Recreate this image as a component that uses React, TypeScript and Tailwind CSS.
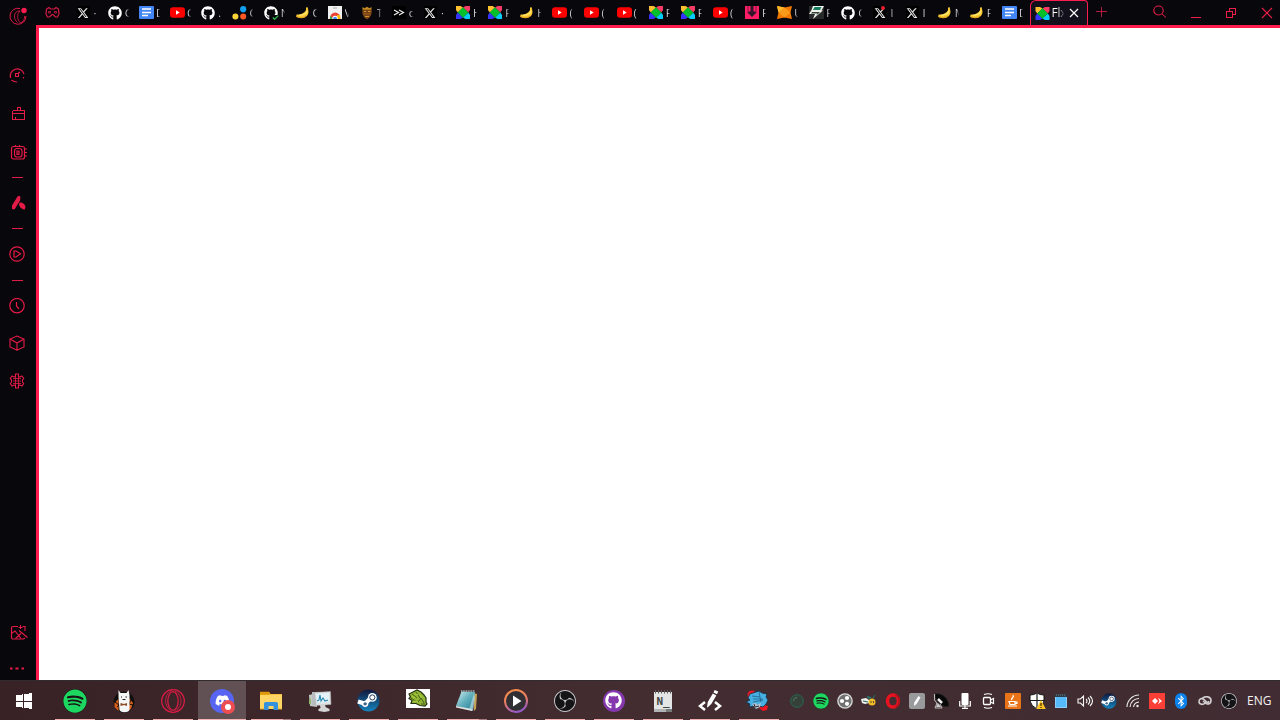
import type { ReactNode } from "react";
import { FaGithub, FaSpotify, FaDiscord, FaXTwitter, FaBluetoothB } from "react-icons/fa6";
import { SiObsstudio } from "react-icons/si";

type DrawProps = { w?: number; h?: number; box?: string; children: ReactNode; crisp?: boolean; className?: string };

function Draw({ w = 16, h, box, children, crisp, className = "" }: DrawProps) {
  const height = h ?? w;
  return (
    <svg
      width={w}
      height={height}
      viewBox={box ?? `0 0 ${w} ${height}`}
      fill="none"
      shapeRendering={crisp ? "crispEdges" : "auto"}
      className={`block shrink-0 ${className}`}
    >
      {children}
    </svg>
  );
}

/* ---------- tab favicons ---------- */

const XIcon = ({ dot }: { dot?: boolean }) => (
  <span className="relative flex h-[13px] w-[13px] items-center justify-center bg-black text-[#e6e6e6]">
    <FaXTwitter size={12} />
    {dot && <span className="absolute right-[1px] top-0 size-[4px] rounded-full bg-[#f01c30]" />}
  </span>
);
const GitIcon = () => <FaGithub size={14} className="shrink-0 text-white" />;
const GitCheck = () => (
  <span className="relative flex shrink-0 text-white">
    <FaGithub size={14} />
    <span className="absolute -right-[1px] bottom-0 bg-[#08070c]">
      <Draw w={7} h={5}><path d="M.8 2.500 2.600 4.300 6.300.600" stroke="#2fb54c" strokeWidth="1.300" /></Draw>
    </span>
  </span>
);
const Docs = () => (
  <Draw w={15} h={13}>
    <rect width="15" height="13" rx="1" fill="#4285f4" />
    <path d="M3 3h9M3 6.500h9M3 9.500h6" stroke="#fff" strokeWidth="1.600" />
  </Draw>
);
const YouTube = () => (
  <Draw w={15} h={11}>
    <rect width="15" height="10.500" y=".2" rx="3" fill="#f00" />
    <path d="M6 3.200v4.600l3.700-2.300z" fill="#fff" />
  </Draw>
);
const Dots = () => (
  <Draw w={15} h={14}>
    <circle cx="11.200" cy="3.200" r="3.100" fill="#129ff0" />
    <circle cx="3.400" cy="10.500" r="3" fill="#fbd438" />
    <circle cx="11.200" cy="10.500" r="3" fill="#ff5722" />
  </Draw>
);
const Banana = () => (
  <Draw w={14} h={13}>
    <path d="M10 1.500 11.700 1.200l.5 2.800c.8 3-.2 6-3.400 7.500-3 1.300-6.800.8-8.800-1l.7-2c3 .5 7.300-.8 9.300-4.300z" fill="#fac831" />
    <path d="M11 4.500c0 2.800-2.700 4.300-8 5" stroke="#ffe872" strokeWidth="1.300" />
    <path d="M.6 10.500c3 1.600 7.400 1.500 9.700-.6" stroke="#dc971b" strokeWidth=".8" />
  </Draw>
);
const ChromeStore = () => (
  <Draw w={14} h={13}>
    <path d="M0 0h14v13H0z" fill="#f1f1f1" />
    <path d="M5 2h4" stroke="#a8a8a8" />
    <path d="M2 12.500a5.200 6 0 0 1 10.400 0z" fill="#ea4335" />
    <path d="M2.500 9.500 5 13H1.800z" fill="#34a853" />
    <path d="M9 9h2.700l.8 4H8z" fill="#fbbc05" />
    <path d="M4.300 13a2.800 3.200 0 0 1 5.600 0z" fill="#fff" />
    <path d="M5.200 13a1.900 2.300 0 0 1 3.800 0z" fill="#4285f4" />
  </Draw>
);
const Honey = () => (
  <Draw w={14} h={14}>
    <path d="M2.500 3.500h9c.8 3-.3 6-2 8.300L7 13.500l-2.700-2C2.800 9.500 1.800 6.500 2.500 3.500z" fill="#754316" />
    <path d="m2.500 1 2 1.300L7 .8l2.500 1.500 2-1.300v2.700h-9z" fill="#c78b22" />
    <path d="M4 5.500h2M8 5.500h2.500M5 10.500h4" stroke="#d4932a" strokeWidth="1" />
    <path d="M3 8h7.500" stroke="#9b5f1c" />
  </Draw>
);
const Chevrons = () => (
  <Draw w={14} h={13}>
    <path d="M0 0h14v13H0z" fill="#000" />
    <path d="m2 4 4.500 2.500L2 9M7 4l4.500 2.500L7 9" stroke="#eee" strokeWidth="1.200" />
  </Draw>
);
const Flixel = () => (
  <Draw w={14} h={13}>
    <path d="M0 0h4.500L7 1.500 1.700 6.500 0 4z" fill="#ffc132" />
    <path d="M14 0H9.500L7 1.500l5.300 5L14 4z" fill="#f83b64" />
    <path d="M0 13h4.500L7 11.500 1.700 6.500 0 9z" fill="#3433ff" />
    <path d="M14 13H9.500L7 11.500l5.300-5L14 9z" fill="#04cdfb" />
    <path d="m7 1.200 5.300 5.300L7 11.800 1.700 6.500z" fill="#00c02c" />
  </Draw>
);
const PinkDown = () => (
  <Draw w={14} h={13}>
    <path d="M0 0h14v13H0z" fill="#ff1d65" />
    <path d="M5.500 0h3v5.500h3v1L7 11 2.500 6.500v-1h3z" fill="#31132a" />
    <path d="M2.500 0h1v5h-1zM10.500 0h1v5h-1z" fill="#7c1742" />
  </Draw>
);
const Haxe = () => (
  <Draw w={15} h={13}>
    <path d="m0 0 7.500 1.500L15 0l-1.500 6.500L15 13l-7.500-1.500L0 13l1.500-6.500z" fill="#f17900" />
    <path d="m7.500 1.500 6 5-6 5-6-5z" fill="#f99b1a" />
    <path d="m0 0 7.500 1.500-6 5z" fill="#fcb92f" />
  </Draw>
);
const Bolt = () => (
  <Draw w={15} h={13}>
    <path d="M0 0h15v13H0z" fill="#28292a" />
    <path d="M4 0h11l-2.500 4.500h1.500L4 13l2-5H0l2.500-4z" fill="#edf3e9" />
    <path d="M5.500 1h7l-1.500 3h-7z" fill="#167b61" />
    <path d="M8 6h3L7 10l1.500-2.500H2L3 6z" fill="#36433d" />
  </Draw>
);

type Tab = { icon: ReactNode; text: string };
const narrowTabs: Tab[] = [
  { icon: <XIcon />, text: "·" },
  { icon: <GitIcon />, text: "G" },
  { icon: <Docs />, text: "D" },
  { icon: <YouTube />, text: "C" },
  { icon: <GitIcon />, text: "." },
  { icon: <Dots />, text: "C" },
  { icon: <GitCheck />, text: "N" },
];
const wideTabs: Tab[] = [
  { icon: <Banana />, text: "O" },
  { icon: <ChromeStore />, text: "V" },
  { icon: <Honey />, text: "T" },
  { icon: <Chevrons />, text: "c" },
  { icon: <XIcon />, text: "·" },
  { icon: <Flixel />, text: "H" },
  { icon: <Flixel />, text: "F" },
  { icon: <Banana />, text: "H" },
  { icon: <YouTube />, text: "(" },
  { icon: <YouTube />, text: "(" },
  { icon: <YouTube />, text: "(" },
  { icon: <Flixel />, text: "F" },
  { icon: <Flixel />, text: "F" },
  { icon: <YouTube />, text: "(" },
  { icon: <PinkDown />, text: "F" },
  { icon: <Haxe />, text: "U" },
  { icon: <Bolt />, text: "F" },
  { icon: <GitIcon />, text: "G" },
  { icon: <XIcon dot />, text: "I" },
  { icon: <XIcon />, text: "I" },
  { icon: <Banana />, text: "M" },
  { icon: <Banana />, text: "F" },
  { icon: <Docs />, text: "D" },
];

function TabContent({ tab }: { tab: Tab }) {
  return (
    <>
      <span className="flex w-[15px] shrink-0 justify-start">{tab.icon}</span>
      <span className="ml-[2px] w-[4px] overflow-hidden bg-gradient-to-r from-[#d8d8dc] from-40% to-[#d8d8dc]/10 bg-clip-text text-[11px] leading-[14px] text-transparent">
        {tab.text}
      </span>
    </>
  );
}

function TopBar() {
  return (
    <header className="flex h-[25px] min-w-0 flex-1 items-stretch pl-[9px]">
      <div className="flex w-[31.500px] shrink-0 items-center">
        <Draw w={15} h={13}>
          <path d="M4 1.500 1.500 3 1 8l1.500 3h2L7 8.500h1L10.500 11h2L14 8l-.5-5L11 1.500 9.500 3h-4z" stroke="#d61b43" strokeWidth="1.200" />
          <path d="M3.500 5.500h2v1.500h-2zM9.500 5.500h2v1.500h-2z" stroke="#d61b43" strokeWidth=".8" />
        </Draw>
      </div>
      {narrowTabs.map((t, i) => (
        <div key={i} className="flex w-[31.200px] shrink-0 items-center"><TabContent tab={t} /></div>
      ))}
      <div className="w-[0.700px] shrink-0" />
      {wideTabs.map((t, i) => (
        <div key={i} className="flex w-[32.120px] shrink-0 items-center"><TabContent tab={t} /></div>
      ))}
      <div className="-ml-[4.500px] flex w-[58px] shrink-0 items-center rounded-tl-[6px] rounded-tr-[4px] border-x border-t border-[#fa1e4e] bg-[#12101a] pl-[4px]">
        <Draw w={15} h={13} box="0 0 14 13">
          <path d="M0 0h4.500L7 1.500 1.700 6.500 0 4z" fill="#ffc132" />
          <path d="M14 0H9.500L7 1.500l5.300 5L14 4z" fill="#f83b64" />
          <path d="M0 13h4.500L7 11.500 1.700 6.500 0 9z" fill="#3433ff" />
          <path d="M14 13H9.500L7 11.500l5.300-5L14 9z" fill="#04cdfb" />
          <path d="m7 1.200 5.300 5.300L7 11.800 1.700 6.500z" fill="#00c02c" />
        </Draw>
        <span className="ml-[2px] w-[12px] overflow-hidden bg-gradient-to-r from-white from-50% to-white/10 bg-clip-text text-[12px] leading-[14px] tracking-[-0.3px] text-transparent">Flx</span>
        <Draw w={10} className="ml-[5px]"><path d="m1 1 8 8M9 1 1 9" stroke="#fff" strokeWidth="1.200" /></Draw>
      </div>
      <div className="ml-[7px] flex w-[12px] items-center">
        <Draw w={12} h={14} crisp><path d="M6.500 1v10M1 5.500h11" stroke="#b51b3f" /></Draw>
      </div>
      <div className="ml-auto flex items-center pr-[7px] text-[#eb1e49]">
        <Draw w={14} h={14} className="-mt-[2px]"><ellipse cx="5.500" cy="5.500" rx="4.700" ry="4.500" stroke="currentColor" strokeWidth="1.100" /><path d="m9 9 4 3.500" stroke="currentColor" /></Draw>
        <Draw w={12} h={12} className="ml-[23px]" crisp><path d="M1 10.500h10" stroke="currentColor" /></Draw>
        <Draw w={12} h={12} className="ml-[23px]" crisp><path d="M4.500 4V1.500h6v6H8M1.500 4.500h6v6h-6z" stroke="currentColor" /></Draw>
        <Draw w={12} h={12} className="ml-[24px]"><path d="m1 1 10 10M11 1 1 11" stroke="currentColor" strokeWidth="1.100" /></Draw>
      </div>
    </header>
  );
}

/* ---------- side bar ---------- */

const Cell = ({ className, children }: { className: string; children: ReactNode }) => (
  <div className={`flex w-[34px] shrink-0 items-center justify-center text-[#e51b47] ${className}`}>{children}</div>
);
const Rule = () => <Cell className="h-[11px] pl-px"><span className="h-px w-[11px] bg-[#e51b47]" /></Cell>;

function SideBar() {
  return (
    <nav className="flex w-[36px] shrink-0 flex-col">
      <div className="h-[31px] shrink-0" />
      <Cell className="h-[39px] pb-px">
        <Draw w={16}>
          <path d="M1.500 11A7 7 0 1 1 15 7" stroke="currentColor" strokeWidth="1.200" />
          <path d="M2.500 13q2.500 2 5.500 2M14.500 10v1.500" stroke="currentColor" strokeWidth="1.200" />
          <path d="M6.500 6.500h3v3h-3zM9 6.500 11 5" stroke="currentColor" strokeWidth="1.100" />
        </Draw>
      </Cell>
      <Cell className="h-[38px] pb-[2px] pl-[2px]">
        <Draw w={15} h={15} crisp>
          <path d="M6.500 4V1.500h3V4M2.500 4.500h11v3h-12v-2zM1.500 7.500v6M13.500 7.500v6M1 13.500h13M4.500 11v3" stroke="currentColor" />
        </Draw>
      </Cell>
      <Cell className="h-[39px] pb-px pl-[3px]">
        <Draw w={17} h={17}>
          <rect x="1.500" y="2.500" width="13" height="12.500" rx="2" stroke="currentColor" strokeWidth="1.200" />
          <rect x="4.500" y="4.500" width="7.500" height="8.500" rx="2.500" stroke="currentColor" strokeWidth="1.200" />
          <path d="M7 7h2v3.500H7zM5.500 1v2M9.500 1v2M15 5h2M15 8.500h2M15 12h2" stroke="currentColor" strokeWidth="1.200" />
        </Draw>
      </Cell>
      <Rule />
      <Cell className="h-[40px] pl-[2px]">
        <Draw w={15} h={16}>
          <path d="M1 14V10.500L6.500 1.500 8.200.700 9.500 2 9 5.500l-5.500 9z" fill="currentColor" />
          <path d="M8.500 7.500c3-.5 5.800 2 6 4.500l-.7 2.500c-3 0-5.300-2.500-5.800-5z" fill="currentColor" />
        </Draw>
      </Cell>
      <Rule />
      <Cell className="h-[40px]">
        <Draw w={16}><circle cx="8" cy="8" r="7.200" stroke="currentColor" strokeWidth="1.200" /><path d="M5 5h2l4.500 2.700L7 11H5z" stroke="currentColor" strokeWidth="1.200" /></Draw>
      </Cell>
      <div className="h-px shrink-0" />
      <Rule />
      <Cell className="h-[39px]">
        <Draw w={16}><circle cx="8" cy="7.700" r="7.200" stroke="currentColor" strokeWidth="1.200" /><path d="M7.500 4v4l2.500 3" stroke="currentColor" strokeWidth="1.200" /></Draw>
      </Cell>
      <Cell className="h-[37px] pb-px">
        <Draw w={16}><path d="m8 1 7 3v8l-7 3.200L1 12V4zM1 4l7 4 7-4M8 8v7" stroke="currentColor" strokeWidth="1.100" /></Draw>
      </Cell>
      <Cell className="h-[39px] pb-px">
        <Draw w={16}>
          <path d="M6.500 1h3v2.500l1.500.5 2-1 1.700 2.500L13.500 7v2l1.200 1.500-1.700 2.500-2-1-1.500.5V15h-3v-2.500L5 12l-2 1-1.700-2.500L2.500 9V7L1.300 5.500 3 3l2 1 1.500-.5z" stroke="currentColor" strokeWidth="1.100" />
          <path d="M6.500 4v8M9.500 4v8M4 5.500h8M4 8h8M4 10.500h8" stroke="currentColor" strokeWidth=".8" />
        </Draw>
      </Cell>
      <div className="flex-1" />
      <Cell className="h-[30px] pb-px pl-[3px]">
        <Draw w={18} h={15}>
          <path d="M8 1.500H3a1.500 1.500 0 0 0-1.500 1.500v9.500A1.500 1.500 0 0 0 3 14h10.500l1.500-1" stroke="currentColor" strokeWidth="1.200" />
          <path d="m2 8 3-2 6 7.500M5.500 13.500 11 8.500M12.500 1.500h2.500V6M10.500 0v4M8.500 2.500h4M9 5.500l8.500 7" stroke="currentColor" strokeWidth="1.100" />
        </Draw>
      </Cell>
      <Cell className="mb-[2px] mt-[10px] h-[20px]">
        <Draw w={14} h={3}><path d="M0 1.500h2.500M5.500 1.500h3M11.500 1.500H14" stroke="currentColor" strokeWidth="2" /></Draw>
      </Cell>
    </nav>
  );
}

/* ---------- task bar ---------- */

const Obs = ({ size = 22 }: { size?: number }) => (
  <span className="rounded-full bg-[#141315] text-[#cac8ca]"><SiObsstudio size={size} /></span>
);
const SteamBall = ({ size }: { size: number }) => (
  <svg width={size} height={size} viewBox="0 0 24 24" className="block">
    <defs><linearGradient id="steam" x1="0" y1="0" x2="0" y2="1"><stop offset="0" stopColor="#11173c" /><stop offset="1" stopColor="#1485bd" /></linearGradient></defs>
    <circle cx="12" cy="12" r="11.500" fill="url(#steam)" />
    <path d="m1 13 7.500 2.500 5-5.500" stroke="#fff" strokeWidth="4.500" fill="none" />
    <circle cx="8.500" cy="15.500" r="3.300" fill="#fff" />
    <circle cx="8.500" cy="15.500" r="1.800" fill="#3a6790" />
    <circle cx="16" cy="8.800" r="4.600" fill="#fff" />
    <circle cx="16" cy="8.800" r="2.700" fill="#fff" stroke="#1b345b" strokeWidth="1" />
  </svg>
);

type TaskItem = { icon: ReactNode; active?: boolean; stacked?: boolean };
const apps: TaskItem[] = [
  { icon: <span className="rounded-full bg-[#181415] text-[#1ed760]"><FaSpotify size={24} /></span> },
  {
    icon: (
      <Draw w={24} h={24}>
        <circle cx="12" cy="13" r="10.500" fill="#12100f" />
        <path d="m2.500 14 4-4v12l-4-4zM17 9l4 5-2 6-4 2z" fill="#d8601c" />
        <path d="M3 13l4 3-2 2M20 9l-3 6 4 1" stroke="#15100e" />
        <path d="M6.500 1 8.500 4h6L16.500 1l1 5v15c-1.500 3-8.500 3-10 0L6.500 8z" fill="#f5f5f6" />
        <path d="M9 8h1M13.500 8h1.500M10.500 10.500h3" stroke="#222" strokeWidth="1.200" />
        <path d="m8.500 14 3.500 1 3-1v3l-3-1-3.500 1z" fill="#8b4924" />
      </Draw>
    ),
  },
  {
    icon: (
      <Draw w={24}>
        <circle cx="12" cy="12" r="11.300" stroke="#e01b46" strokeWidth="1.200" />
        <ellipse cx="12" cy="12" rx="5.200" ry="9.300" stroke="#e01b46" strokeWidth="1.200" />
        <path d="M11 1.500C3 4 2 18 11 22.500M14 2c8 4 8 16 0 20" stroke="#c51d41" />
      </Draw>
    ),
  },
  {
    active: true,
    icon: (
      <span className="relative flex size-[24px] items-center justify-center rounded-full bg-[#5865f2] text-white">
        <FaDiscord size={15} />
        <span className="absolute -bottom-[1px] -right-[1px] flex size-[14px] items-center justify-center rounded-full bg-[#ed4e52]">
          <span className="size-[6px] rounded-full bg-white" />
        </span>
      </span>
    ),
  },
  {
    stacked: true,
    icon: (
      <Draw w={22} h={20}>
        <path d="M0 1h9l1.500 2H22v15H0z" fill="#f6c03d" />
        <path d="M0 .8h9l1 2-1 1H0z" fill="#df9809" />
        <path d="M0 4h22v14H0z" fill="#ffd663" />
        <path d="M4 19v-7l1.500-1h11l1.500 1v7h-4.500v-4h-5v4z" fill="#3492dc" />
        <path d="M0 18h4M18 18h4" stroke="#e9a92a" />
      </Draw>
    ),
  },
  {
    icon: (
      <Draw w={24} h={22}>
        <path d="M1 5 9 3v14l-7-1z" fill="#c4c8c3" /><path d="M1 9h2v5H1z" fill="#91b66c" />
        <path d="M4 2h15v13H4z" fill="#b9bdbf" />
        <path d="m6.500 2.500 16-1 .5 13-15 1z" fill="#dfe3e4" stroke="#a3a7a8" strokeWidth=".5" />
        <path d="m8 4 13-1v9l-12 1z" fill="#e3f2fa" />
        <path d="m9 11 2-1 1-5 1 6 2-3 2 3 3-1" stroke="#2586af" strokeWidth="1.100" />
        <path d="m12 15 5-.5.500 2.500 4 2v2l-5 1-6-1v-2l2-1z" fill="#d5d5d6" />
      </Draw>
    ),
  },
  { icon: <SteamBall size={23} /> },
  {
    icon: (
      <Draw w={24} h={19} className="mb-[5px]">
        <path d="M0 0h24v19H0z" fill="#fff" />
        <path d="m3 5 4-2 4-2 4 2 3 3 2 3v4l1 2-2 2-5-.5-4-2H5l1-3-3-2 1.500-1.500z" fill="#91b631" stroke="#263215" strokeWidth="1.200" />
        <path d="m6 5 5 4M10 3l4 6M5 9l6 4M12 13l3-4 3 5M15 15h4" stroke="#31411a" strokeWidth=".8" />
        <path d="m9 5 3 1M6 7l3 2M8 12l4 1M14 6l2 3" stroke="#a8ce3e" strokeWidth="1.200" />
      </Draw>
    ),
  },
  {
    stacked: true,
    icon: (
      <Draw w={23} h={23}>
        <defs><linearGradient id="pad" x2="1" y2="1"><stop stopColor="#d0eef0" /><stop offset=".5" stopColor="#60aebc" /><stop offset="1" stopColor="#217b91" /></linearGradient></defs>
        <path d="m19 4 3 1-1 15-2 2z" fill="#c2a052" />
        <path d="M6.500 2.500 20 3l-2.500 18L1 17z" fill="url(#pad)" />
        <path d="m1 17 16 3v2L1 18.500z" fill="#e1e6e7" />
        <path d="M6 2h14" stroke="#b4bcbc" strokeWidth="1.500" strokeDasharray="1 .7" />
        <path d="m19 4-5 17 4 1 2-13z" fill="#b9d9df" opacity=".7" />
      </Draw>
    ),
  },
  {
    icon: (
      <Draw w={24}>
        <defs><linearGradient id="play" x1=".3" x2=".6" y2="1"><stop stopColor="#fa9048" /><stop offset=".5" stopColor="#e47965" /><stop offset="1" stopColor="#9158c9" /></linearGradient></defs>
        <circle cx="12" cy="12" r="11" fill="#303034" stroke="url(#play)" strokeWidth="2" />
        <path d="m9 6.500 8.500 5.500L9 17.500z" fill="#fff" />
      </Draw>
    ),
  },
  { icon: <Obs /> },
  { icon: <span className="flex size-[22px] items-center justify-center rounded-full bg-[#8538ad] text-white"><FaGithub size={17} /></span> },
  {
    icon: (
      <Draw w={18} h={22}>
        <path d="M0 2h18v20H0z" fill="#e4e5e5" />
        <path d="M0 19h18v3H0z" fill="#777b7b" />
        <path d="M0 19h12v3H0z" fill="#b1b4b4" />
        <path d="M1.500 0v3.500M4.500 0v3.500M7.500 0v3.500M10.500 0v3.500M13.500 0v3.500M16.500 0v3.500" stroke="#595b5c" />
        <text x="2.500" y="15" fill="#424746" fontFamily="DejaVu Sans Mono, monospace" fontSize="11" fontWeight="700">N_</text>
      </Draw>
    ),
  },
  {
    icon: (
      <Draw w={24} h={24} className="-translate-x-[2px]">
        <path d="m7 13-5 4 5 4M17 13l5 4-5 4" stroke="#fff" strokeWidth="2.500" />
        <path d="m9 18 .8-5 5-8.500 3.500 2-5 8.500L9.500 18.500zM15.500 3.500l1.200-2.500 3.500 1.500-1.200 2.800z" fill="#fff" />
      </Draw>
    ),
  },
  {
    icon: (
      <Draw w={24} h={22} className="-translate-x-[3px]">
        <circle cx="6" cy="5" r="4.500" fill="#ec1720" /><path d="m13 18 5-3 4 1-1 4-4 1z" fill="#ec1720" />
        <path d="m4 4 6-2 3-1 3 2 5 1-1 3 2 3-2 4-3 3-4-1-3 3-2-3-5 1 1-3-4-2 4-2-2-2z" fill="#48afe2" stroke="#123048" strokeWidth=".8" />
        <path d="m6 6 8 1M7 9h10M13 2l2 10M7 12l10-2" stroke="#20628a" strokeWidth=".8" />
        <path d="m6 14 4-1 1 2 4-2-1 4-4 2z" fill="#bcc1c8" /><path d="m8 14 1 3 4-1" stroke="#282a38" />
      </Draw>
    ),
  },
];

const trayIcons: ReactNode[] = [
  <Draw w={14}><circle cx="7" cy="7" r="6.300" fill="#354038" stroke="#286b4f" /><path d="M3.500 7A3.500 3.500 0 0 1 7 3.500" stroke="#527c65" /></Draw>,
  <span className="rounded-full bg-[#181415] text-[#1ed760]"><FaSpotify size={16} /></span>,
  <Draw w={16}><circle cx="8" cy="8" r="7.800" fill="#d9d9d9" /><circle cx="8" cy="8" r="6.500" fill="#717171" /><circle cx="5" cy="8" r="2.100" fill="#fff" /><circle cx="10" cy="5" r="2.100" fill="#fff" /><circle cx="10" cy="10.800" r="2.100" fill="#fff" /></Draw>,
  <Draw w={16} h={14}><path d="M0 5 5 4l3 2v3L4 10 1 9z" fill="#f0f1e9" /><circle cx="11" cy="8" r="3.500" fill="#f0bd2a" /><path d="m2 7 5 1M12 4l2-3" stroke="#276b6b" strokeWidth="1.100" /><path d="M10 7v2M12.500 7v2" stroke="#604c1d" /><path d="m6 3 4 1" stroke="#2d736e" strokeWidth="2" /></Draw>,
  <Draw w={16}><ellipse cx="8" cy="8" rx="5.500" ry="6" stroke="#e7131f" strokeWidth="3.500" /><path d="M10.500 2c5 2 5 10 0 12" stroke="#a5131d" strokeWidth="1.500" /></Draw>,
  <Draw w={16}><rect width="16" height="16" rx="2" fill="#999a9b" /><path d="m5 13 .3-3.500L9.500 3l2 1.500-4 6.500z" fill="#fff" /></Draw>,
  <Draw w={17}><path d="M2 1c7-2 14 5 14 12-6 3-14-4-14-12z" fill="#080808" stroke="#292326" /><path d="M1.500 1v6l3 4M4 10l-2 5h7l-2-4" stroke="#b9b9b9" /><path d="m5 6 4 4" stroke="#eee" strokeWidth="2.500" /><path d="m3 14 2-4 3 4z" fill="#ccc" /></Draw>,
  <Draw w={12} h={16}><rect x="2.500" y="0" width="7" height="12" rx="1" fill="#fff" /><path d="M.7 8v5h10.600V8M6 12v3M3 15.300h6" stroke="#fff" strokeWidth="1.200" /></Draw>,
  <Draw w={14} h={16}><rect x="1.500" y="4.500" width="7" height="7" rx="1" stroke="#fff" strokeWidth="1.300" /><path d="m8.500 7 3-1.500v5l-3-1.500M2 1.500q4-1.500 8 0M2 14.500q4 1.500 8 0" stroke="#fff" strokeWidth="1.200" /></Draw>,
  <Draw w={16}><rect width="16" height="16" rx="1" fill="#e87318" /><path d="M4 8.500h6v3H5zM10 9h2v1.500h-2M3 13h9M7 7c-2-2 3-2 1-5" stroke="#fff" strokeWidth="1.200" /></Draw>,
  <Draw w={17} h={16}><path d="M8 0q3 2 7 2v6q-1 5-7 8-6-3-7-8V2q4 0 7-2z" fill="#fff" stroke="#111" /><path d="M8 1v14M1 7.500h14" stroke="#17191b" strokeWidth="1.200" /><path d="m12 7 4.800 9H7.200z" fill="#ffc223" /><path d="M12 10v3M12 14v1" stroke="#382500" strokeWidth="1.200" /></Draw>,
  <Draw w={12} h={14}><path d="M0 0h12v14H0z" fill="#56bbfa" /><path d="M0 0h12v3H0z" fill="#303a44" /><path d="M1 1h10" stroke="#77818a" strokeDasharray="1 1" /><path d="M.5 3v10.500h11V3" stroke="#a5d8f7" strokeWidth=".7" /></Draw>,
  <Draw w={17} h={14}><path d="M1 5h2.500L6.500 2v10L3.500 9H1zM9 5q2 2 0 4M11 3.500q3.500 3.500 0 7M13 2q5 5 0 10" stroke="#f7f7f7" strokeWidth="1.100" /></Draw>,
  <SteamBall size={16} />,
  <Draw w={14} h={14}><path d="M1 13A12 12 0 0 1 13 1M4 13a9 9 0 0 1 9-8.500M7.500 13A6 6 0 0 1 13 8" stroke="#ececec" strokeWidth="1.100" /><circle cx="11.500" cy="12" r="1.200" fill="#ececec" /></Draw>,
  <Draw w={16}><path d="M0 0h16v16H0z" fill="#fa4036" /><path d="m6 5 3 3-3 3-3-3z" fill="#fff" /><path d="m9 4.800 4 3.200-4 3.200L10.500 8z" fill="#fff" /></Draw>,
  <span className="flex h-[16px] w-[12px] items-center justify-center rounded-[6px] bg-[#0b82ed] text-white"><FaBluetoothB size={12} /></span>,
  <Draw w={14} h={10}><path d="M8 6.500C5 9.500 1 8.500 1 5.500S4 2 6 3.500l2.500 2.300C10 7 11 6 10.500 5" stroke="#d2cfd1" strokeWidth="1.600" /><path d="M4 2.500C7-.5 13 .5 13 4.500S9 8.700 7.500 7L5 5" stroke="#d2cfd1" strokeWidth="1.600" /></Draw>,
  <Obs size={16} />,
];

function TaskBar() {
  return (
    <footer className="flex h-[40px] shrink-0 border-t border-[#302b2e] bg-gradient-to-r from-[#392225] via-[#432d31] to-[#402c32]">
      <div className="flex w-[50px] shrink-0 items-center justify-center pr-[2px] pt-px">
        <Draw w={16} crisp><path d="M0 2.300 7 1.300v6.200H0zM8 1.200 16 0v7.500H8zM0 8.500h7v6.200l-7-1zM8 8.500h8V16l-8-1.200z" fill="#fff" /></Draw>
      </div>
      {apps.map((a, i) => (
        <div key={i} className={`flex w-[49px] shrink-0 flex-col ${a.active ? "pl-[1px]" : ""}`}>
          <div className={`flex h-[38px] items-center justify-center pt-px ${a.active ? "bg-[#615054]" : ""}`}>{a.icon}</div>
          {a.active ? (
            <div className="h-px bg-[#f4b3b4]" />
          ) : (
            <div className={`flex h-px w-[40px] ${i > 12 ? "ml-[3px]" : "ml-[5px]"}`}>
              <div className="flex-1 bg-[#f2aeb0]" />
              {a.stacked && <div className="w-[8px] bg-[#a67b7f]" />}
            </div>
          )}
        </div>
      ))}
      <div className="flex items-center pt-px">
        {trayIcons.map((icon, i) => (
          <div key={i} className="flex w-[24px] shrink-0 items-center justify-center">{icon}</div>
        ))}
        <span className="ml-[6px] text-[12px] leading-none text-[#f5f2f3]">ENG</span>
      </div>
    </footer>
  );
}

export default function App() {
  return (
    <div className="flex h-[720px] w-[1280px] flex-col overflow-hidden bg-[#08070c] font-['Open_Sans','Noto_Sans',sans-serif]">
      <div className="flex h-[25px] shrink-0">
        <div className="flex w-[36px] shrink-0 items-start pl-[9px] pt-[7px] text-[#e51b47]">
          <Draw w={19} h={18}>
            <path d="M11 1.500A8 8 0 1 0 17 9" stroke="currentColor" />
            <path d="M11 4C5 3 3.500 12 8.500 15.500M11.500 4c-4 2-3.500 9 0 12 3-1.500 4.500-4 4-7" stroke="currentColor" strokeWidth=".8" />
            <circle cx="15" cy="3.500" r="2.700" fill="#fc1c4d" />
          </Draw>
        </div>
        <TopBar />
      </div>
      <div className="flex min-h-0 flex-1">
        <SideBar />
        <main className="flex-1 border-l-[3px] border-t-[3px] border-[#ff1b4b] bg-white" />
      </div>
      <TaskBar />
    </div>
  );
}
